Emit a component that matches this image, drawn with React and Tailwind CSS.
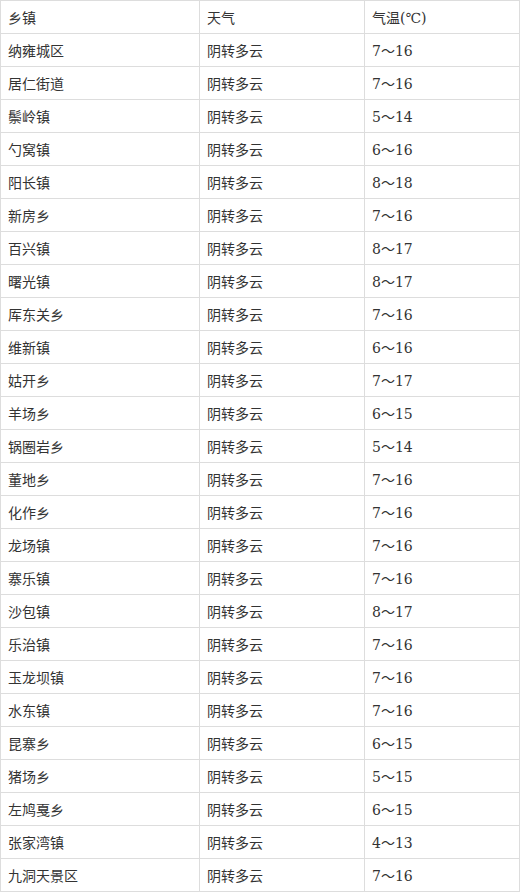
const rows = [
  ["纳雍城区", "阴转多云", "7～16"],
  ["居仁街道", "阴转多云", "7～16"],
  ["鬃岭镇", "阴转多云", "5～14"],
  ["勺窝镇", "阴转多云", "6～16"],
  ["阳长镇", "阴转多云", "8～18"],
  ["新房乡", "阴转多云", "7～16"],
  ["百兴镇", "阴转多云", "8～17"],
  ["曙光镇", "阴转多云", "8～17"],
  ["厍东关乡", "阴转多云", "7～16"],
  ["维新镇", "阴转多云", "6～16"],
  ["姑开乡", "阴转多云", "7～17"],
  ["羊场乡", "阴转多云", "6～15"],
  ["锅圈岩乡", "阴转多云", "5～14"],
  ["董地乡", "阴转多云", "7～16"],
  ["化作乡", "阴转多云", "7～16"],
  ["龙场镇", "阴转多云", "7～16"],
  ["寨乐镇", "阴转多云", "7～16"],
  ["沙包镇", "阴转多云", "8～17"],
  ["乐治镇", "阴转多云", "7～16"],
  ["玉龙坝镇", "阴转多云", "7～16"],
  ["水东镇", "阴转多云", "7～16"],
  ["昆寨乡", "阴转多云", "6～15"],
  ["猪场乡", "阴转多云", "5～15"],
  ["左鸠戛乡", "阴转多云", "6～15"],
  ["张家湾镇", "阴转多云", "4～13"],
  ["九洞天景区", "阴转多云", "7～16"],
];

const cell =
  "h-[33px] flex items-center pl-[7px] pt-[2px] border-r border-b border-[#dddddd] text-[14px] text-[#333333]";

export default function App() {
  return (
    <div className="w-[520px] bg-white font-['DejaVu_Serif','Noto_Sans_CJK_SC',serif]">
      <div className="grid grid-cols-[199px_165px_1fr] border-t border-l border-[#dddddd]">
        {/* header */}
        <div className={cell}>乡镇</div>
        <div className={cell}>天气</div>
        <div className={cell}>气温(℃)</div>

        {rows.map(([town, weather, temp]) => (
          <div key={town} className="contents">
            <div className={cell}>{town}</div>
            <div className={cell}>{weather}</div>
            <div className={cell}>{temp}</div>
          </div>
        ))}
      </div>
    </div>
  );
}
